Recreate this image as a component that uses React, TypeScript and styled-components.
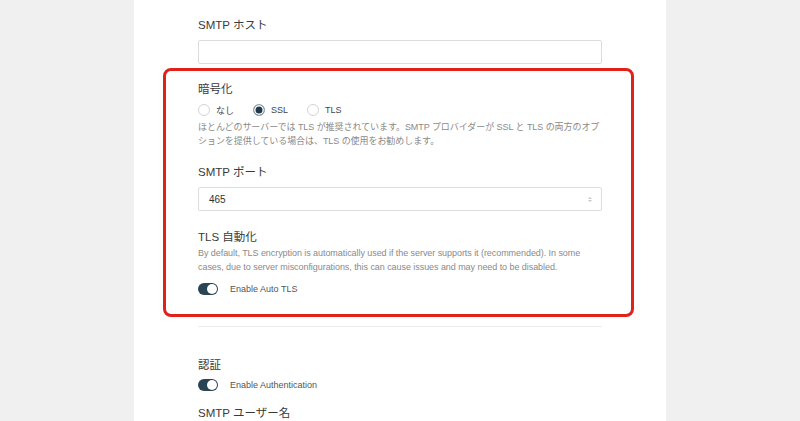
import styled, {createGlobalStyle} from 'styled-components';

const GlobalStyle = createGlobalStyle`
  html, body {
    margin: 0;
    padding: 0;
    background: #f0f0f0;
    font-family: "Liberation Sans", "Noto Sans CJK JP", sans-serif;
    color: #333;
  }
`;

const Page = styled.div`
  height: 421px;
  overflow: hidden;
`;

const Card = styled.div`
  width: 532px;
  margin: 0 auto;
  box-sizing: border-box;
  min-height: 421px;
  background: #fff;
  padding: 17px 64px 0;
  display: flex;
  flex-direction: column;
`;

const Label = styled.div<{$gap?: number; $top?: number}>`
  font-size: 11.5px;
  line-height: 16px;
  color: #3a3a3a;
  margin-top: ${p => p.$top ?? 0}px;
  margin-bottom: ${p => p.$gap ?? 0}px;
`;

const InputBox = styled.div`
  height: 24px;
  box-sizing: border-box;
  border: 1px solid #dcdcdc;
  border-radius: 2px;
  display: flex;
  align-items: center;
  justify-content: space-between;
  padding: 0 9px 0 10px;
  font-size: 10px;
  color: #333;
`;

const Spinner = styled.span`
  display: flex;
  flex-direction: column;
  align-items: center;
  gap: 1px;
  span {
    width: 0;
    height: 0;
    border-left: 2px solid transparent;
    border-right: 2px solid transparent;
  }
  span:first-child {
    border-bottom: 2.5px solid #c8c8c8;
  }
  span:last-child {
    border-top: 2.5px solid #c8c8c8;
  }
`;

const Highlight = styled.div`
  margin: 4px -32px 0 -35px;
  padding: 10px 29px 18px 32px;
  border: 3px solid #e3211b;
  border-radius: 8px;
  display: flex;
  flex-direction: column;
`;

const RadioRow = styled.div`
  display: flex;
  align-items: center;
  height: 14px;
  margin-top: 6px;
`;

const RadioItem = styled.label`
  display: flex;
  align-items: center;
  gap: 6px;
  margin-right: 19px;
  font-size: 9px;
  color: #444;
`;

const RadioDot = styled.span<{$on?: boolean}>`
  width: 12px;
  height: 12px;
  box-sizing: border-box;
  border-radius: 50%;
  border: 1px solid ${p => (p.$on ? '#9aa6ad' : '#d4d4d4')};
  background: ${p => (p.$on ? '#1f3a4b' : '#fff')};
  box-shadow: ${p => (p.$on ? 'inset 0 0 0 1.5px #fff' : 'none')};
`;

const Help = styled.p<{$top: number}>`
  margin: ${p => p.$top}px 0 0;
  font-size: 9px;
  line-height: 13.5px;
  letter-spacing: -0.06px;
  color: #8a8a8a;
`;

const ToggleRow = styled.div<{$top: number}>`
  display: flex;
  align-items: center;
  gap: 12px;
  height: 14px;
  margin-top: ${p => p.$top}px;
  font-size: 9px;
  color: #555;
`;

const Switch = styled.span`
  width: 20px;
  height: 12px;
  border-radius: 6px;
  background: #2a4455;
  display: flex;
  align-items: center;
  justify-content: flex-end;
  padding: 0 1px;
  box-sizing: border-box;
  &::after {
    content: '';
    width: 10px;
    height: 10px;
    border-radius: 50%;
    background: #fff;
  }
`;

const Divider = styled.hr`
  border: 0;
  border-top: 1px solid #ececec;
  margin: 9px 0 0;
`;

export default function App() {
  return (
    <Page>
      <GlobalStyle />
      <Card>
        <Label $gap={7}>SMTP ホスト</Label>
        <InputBox />
        <Highlight>
          <Label>暗号化</Label>
          <RadioRow>
            <RadioItem>
              <RadioDot />
              なし
            </RadioItem>
            <RadioItem>
              <RadioDot $on />
              SSL
            </RadioItem>
            <RadioItem>
              <RadioDot />
              TLS
            </RadioItem>
          </RadioRow>
          <Help $top={4}>
            ほとんどのサーバーでは TLS が推奨されています。SMTP プロバイダーが SSL と TLS の両方のオプションを提供している場合は、TLS の使用をお勧めします。
          </Help>
          <Label $top={16} $gap={7}>
            SMTP ポート
          </Label>
          <InputBox>
            465
            <Spinner>
              <span />
              <span />
            </Spinner>
          </InputBox>
          <Label $top={18}>TLS 自動化</Label>
          <Help $top={2}>
            By default, TLS encryption is automatically used if the server supports it (recommended). In some cases, due to
            server misconfigurations, this can cause issues and may need to be disabled.
          </Help>
          <ToggleRow $top={8}>
            <Switch />
            Enable Auto TLS
          </ToggleRow>
        </Highlight>
        <Divider />
        <Label $top={30}>認証</Label>
        <ToggleRow $top={5}>
          <Switch />
          Enable Authentication
        </ToggleRow>
        <Label $top={13}>SMTP ユーザー名</Label>
      </Card>
    </Page>
  );
}
